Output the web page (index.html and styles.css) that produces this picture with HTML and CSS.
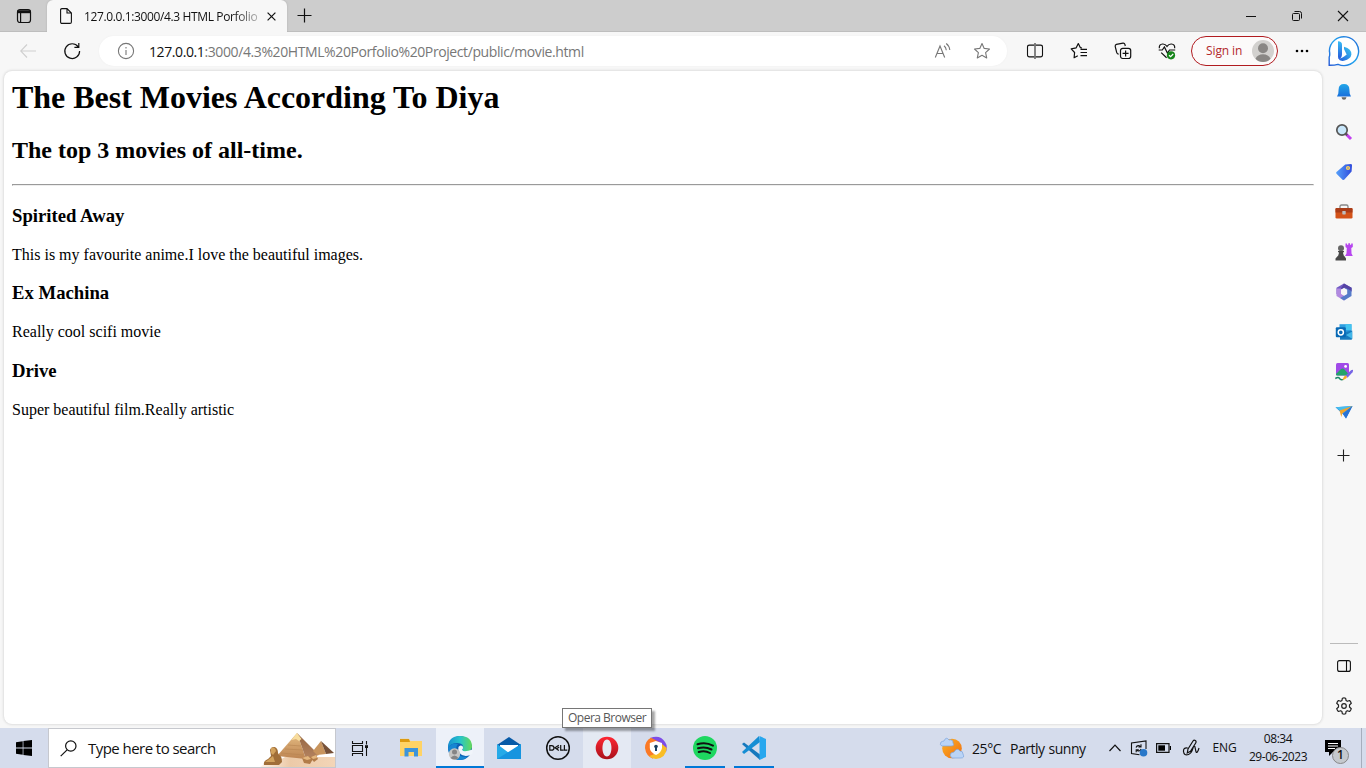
FILE: index.html
```html
<!DOCTYPE html>
<html lang="en">
<head>
<meta charset="utf-8">
<title>127.0.0.1:3000/4.3 HTML Porfolio Project</title>
<link rel="stylesheet" href="styles.css">
</head>
<body>
<div class="screen">
  <header class="tabbar">
    <div class="tab-actions"><svg width="16" height="16" viewBox="0 0 16 16" fill="none" stroke="#111" stroke-width="1.2"><rect x="1.5" y="1.5" width="13" height="13" rx="2.5"/><path d="M1.5 3.7H14.5" stroke-width="3"/><path d="M4.6 5V14.5"/></svg></div>
    <div class="tab">
      <svg width="12" height="16" viewBox="0 0 12 16" fill="none" stroke="#111" stroke-width="1.1"><path d="M1.5.6H7L11.4 5V14Q11.4 15.4 10 15.4H2Q.6 15.4.6 14V2Q.6.6 2 .6ZM7 .6V5H11.4"/></svg>
      <span class="tab-title">127.0.0.1:3000/4.3 HTML Porfolio</span>
      <svg class="tab-close" width="9" height="9" viewBox="0 0 9 9" stroke="#111" stroke-width="1.2"><path d="M.6.6 8.4 8.4M8.4.6.6 8.4"/></svg>
    </div>
    <svg class="tab-new" width="15" height="15" viewBox="0 0 15 15" stroke="#111" stroke-width="1.2"><path d="M7.5.5V14.5M.5 7.5H14.5"/></svg>
    <div class="window-controls">
      <span><svg width="12" height="12" viewBox="0 0 12 12" stroke="#111"><path d="M1 6.5H11"/></svg></span>
      <span><svg width="12" height="12" viewBox="0 0 12 12" fill="none" stroke="#111"><rect x="1.5" y="3.5" width="7" height="7" rx="1"/><path d="M3.5 1.5H8.5Q10.5 1.5 10.5 3.5V8.5"/></svg></span>
      <span><svg width="12" height="12" viewBox="0 0 12 12" stroke="#111" stroke-width="1.1"><path d="M1 1 11 11M11 1 1 11"/></svg></span>
    </div>
  </header>

  <div class="toolbar">
    <span class="tool"><svg width="16" height="14" viewBox="0 0 16 14" fill="none" stroke="#cfcfcf" stroke-width="1.1"><path d="M7 .5.7 7 7 13.5M.7 7H16"/></svg></span>
    <span class="tool"><svg width="18" height="18" viewBox="0 0 18 18" fill="none" stroke="#111" stroke-width="1.2"><path d="M15.2 4.8A7.4 7.4 0 1 0 16.6 9M15.8 1V5.3H11.4"/></svg></span>
    <div class="address">
      <svg width="18" height="18" viewBox="0 0 18 18" fill="none" stroke="#777" stroke-width="1.1"><circle cx="9" cy="9" r="7.6"/><path d="M9 8V13M9 5V6.4"/></svg>
      <span class="url"><b>127.0.0.1</b>:3000/4.3%20HTML%20Porfolio%20Project/public/movie.html</span>
      <svg class="read" width="18" height="18" viewBox="0 0 18 18" fill="none" stroke="#777" stroke-width="1.1"><path d="M1.3 15.5 6 4 10.7 15.5M3 11.5H9M10 3.8Q12 5.2 12.3 8.2M12.2 1.5Q15.3 3.8 15.8 8"/></svg>
      <svg width="18" height="18" viewBox="0 0 18 18" fill="none" stroke="#777" stroke-width="1.1" stroke-linejoin="round"><path d="M9 1.5 11.2 6.4 16.5 7 12.6 10.6 13.7 15.9 9 13.3 4.3 15.9 5.4 10.6 1.5 7 6.8 6.4Z"/></svg>
    </div>
    <span class="tool"><svg width="18" height="18" viewBox="0 0 18 18" fill="none" stroke="#111" stroke-width="1.1"><path d="M9 3.1H3.5Q1.5 3.1 1.5 5V13Q1.5 14.9 3.5 14.9H9M9 3.1H14.5Q16.5 3.1 16.5 5V13Q16.5 14.9 14.5 14.9H9"/><path d="M9 1V17" stroke="#777" stroke-width="1.8"/></svg></span>
    <span class="tool"><svg width="18" height="18" viewBox="0 0 18 18" fill="none" stroke="#111" stroke-width="1.2" stroke-linejoin="round"><path d="M12 6 10.4 5.7 8.3 1.6 6.2 5.8 1.2 6.8 4.6 10.5 4.1 15.7 7.8 13.8M10.5 7.3H17M10.5 10.5H17M10.5 13.6H17"/></svg></span>
    <span class="tool"><svg width="18" height="18" viewBox="0 0 18 18" fill="none" stroke="#111" stroke-width="1.2"><path d="M4.7 12.3 3.6 11.7Q3 11.3 2.7 10.5L1.2 4.3Q1 2.8 2.4 2.4L9 1.1Q10.5.9 10.9 2.4L11.3 4"/><rect x="6.5" y="6.3" width="10.2" height="10.2" rx="2.2"/><path d="M11.6 8.4V14.4M8.6 11.4H14.6"/></svg></span>
    <span class="tool"><svg width="18" height="18" viewBox="0 0 18 18" fill="none" stroke="#111" stroke-width="1.2"><path d="M1.3 6.2Q1 2.2 4.6 2 7.2 1.8 9 4.4 10.8 1.8 13.4 2 17 2.2 16.7 6.2M.7 8H4.3L6.4 5 9.4 11 11.5 8H17.2M3.2 10.6 8.6 15.8"/><circle cx="13" cy="13.3" r="4.1" fill="#16851b" stroke="none"/><path d="M11 13.2 12.6 14.6 15.2 12" stroke="#fff"/></svg></span>
    <div class="signin"><span>Sign in</span>
      <svg width="22" height="22" viewBox="0 0 22 22"><circle cx="11" cy="11" r="11" fill="#d3d1cf"/><circle cx="11" cy="8.2" r="5" fill="#8a8785"/><path d="M3.5 18.8Q5.5 14.3 11 14.3T18.5 18.8Q15.5 22 11 22T3.5 18.8Z" fill="#8a8785"/></svg>
    </div>
    <span class="tool more"><svg width="14" height="4" viewBox="0 0 14 4"><circle cx="2" cy="2" r="1.3"/><circle cx="7" cy="2" r="1.3"/><circle cx="12" cy="2" r="1.3"/></svg></span>
    <span class="bing"><svg width="32" height="32" viewBox="0 0 32 32"><defs><linearGradient id="ring" x1="0" y1="1" x2="1" y2="0"><stop stop-color="#2459d5"/><stop offset=".5" stop-color="#23a5ef"/><stop offset="1" stop-color="#2367d5"/></linearGradient><linearGradient id="bing-b" x1="0" y1="0" x2="0" y2="1"><stop stop-color="#37bdf4"/><stop offset="1" stop-color="#2556d9"/></linearGradient><linearGradient id="bing-bowl" x1="1" y1="0" x2="0" y2="1"><stop stop-color="#3ccaf0"/><stop offset="1" stop-color="#2158dc"/></linearGradient></defs><path d="M1.2 30.3V22Q2.2 20 1.4 16A14.6 14.4 0 1 1 10 29.3C7 30.3 4 30.3 1.2 30.3Z" fill="#fff" stroke="url(#ring)" stroke-width="1.4"/><path d="M10 6.2Q14 6.4 14 9.5V19Q14 23 11 24.3 10 23.5 10 21.5Z" fill="url(#bing-b)"/><path d="M16 11.8Q23.8 14 23.4 19.5 22.8 24 16 25.8 11.5 26.6 10.3 23.3 13 24.3 18.7 19.4L17.3 16.8Q15.4 14 16 11.8Z" fill="url(#bing-bowl)"/></svg></span>
  </div>

  <div class="workspace">
    <main class="page">
      <h1>The Best Movies According To Diya</h1>
      <h2>The top 3 movies of all-time.</h2>
      <hr>
      <h3>Spirited Away</h3>
      <p>This is my favourite anime.I love the beautiful images.</p>
      <h3>Ex Machina</h3>
      <p>Really cool scifi movie</p>
      <h3>Drive</h3>
      <p>Super beautiful film.Really artistic</p>
    </main>
    <aside class="sidebar">
      <span><svg width="18" height="18" viewBox="0 0 18 18"><defs><linearGradient id="bell" x1="0" y1="0" x2="0" y2="1"><stop stop-color="#22a6e8"/><stop offset="1" stop-color="#1970dc"/></linearGradient></defs><path d="M9 1Q14.3 1 14.4 6.5L14.7 10.5 16 13.5H2L3.3 10.5 3.6 6.5Q3.7 1 9 1Z" fill="url(#bell)"/><path d="M6.5 14.2H11.5Q11 16.8 9 16.8T6.5 14.2Z" fill="#666"/></svg></span>
      <span><svg width="18" height="18" viewBox="0 0 18 18"><path d="M11 11 16 16" stroke="#c33ff0" stroke-width="3"/><path d="M10.5 10.5 12.2 12.2" stroke="#555" stroke-width="2"/><circle cx="7" cy="7" r="5.2" fill="#c8e6fa" stroke="#555" stroke-width="1.7"/></svg></span>
      <span><svg width="18" height="18" viewBox="0 0 18 18"><defs><linearGradient id="tag"><stop stop-color="#55a0fa"/><stop offset="1" stop-color="#304bdc"/></linearGradient></defs><path d="M10.2 1.6 16 1.1Q17.2 1.1 17 2.6L16.6 8.6 9.4 16.6Q8.4 17.5 7.3 16.5L1.5 10.8Q.7 9.8 1.5 9Z" fill="url(#tag)"/><circle cx="13" cy="5" r="2.1" fill="#ffd35a"/><circle cx="13" cy="5" r=".8" fill="#6a7fb5"/></svg></span>
      <span><svg width="18" height="18" viewBox="0 0 18 18"><path d="M5 6V3.5Q5 2 6.5 2H11.5Q13 2 13 3.5V6" fill="none" stroke="#888" stroke-width="1.3"/><rect x=".5" y="5" width="17" height="10.5" rx="1.3" fill="#d35218"/><path d="M.5 6Q.5 5 1.5 5H16.5Q17.5 5 17.5 6V9.5H.5Z" fill="#a93c18"/><rect x="7.3" y="8" width="3.4" height="3.4" rx=".6" fill="#bdbdbd"/></svg></span>
      <span><svg width="18" height="18" viewBox="0 0 18 18"><path d="M10.5.5H12V1.8H13.3V.3H15V1.8H16.2V.5H17.8V4L16.3 5 16.5 10.5 17.8 13H10L11.5 10.5 11.8 5 10.5 4Z" fill="#b746ef"/><circle cx="6" cy="5.2" r="3" fill="#666"/><path d="M3 8H9V9.3H8Q8 12 9.7 13.5L11 15.5V17.5H.5V15.5L2.3 13.5Q4 12 4 9.3H3Z" fill="#484848"/></svg></span>
      <span><svg width="18" height="18" viewBox="0 0 18 18"><path d="M9 .5 16.5 4.8V9L9 4.8 5.2 7V13L1.5 11V4.8Z" fill="#715bc4"/><path d="M1.5 5.5 6 5.6V10.8L12.5 14.8 9 17.5 1.5 13Z" fill="#b28ae0"/><path d="M16.5 4.8V13L9 17.5 5.2 14.9 12.2 11V6.5L9 4.8Z" fill="#567bc9"/><path d="M9 .5 16.5 4.8V8L10 4.5 5.5 6.2Z" fill="#5543a3"/><path d="M9 5.7 12 7.4V10.8L9 12.6 6 10.8V7.4Z" fill="#f7f7f7"/></svg></span>
      <span><svg width="18" height="18" viewBox="0 0 18 18"><rect x="4.5" y="1.2" width="12" height="12" fill="#2d9ee0"/><path d="M10.5 1.2H16.5V7H10.5Z" fill="#43c5f0"/><path d="M5 16.8V10L17.2 7.5V15.8Q17.2 16.8 16 16.8Z" fill="#177bbf"/><path d="M17.2 8.5V15.8L11 12Z" fill="#42b6e8"/><rect x=".8" y="4.3" width="10" height="10" rx="1" fill="#0869b5"/><circle cx="5.8" cy="9.3" r="2.6" fill="none" stroke="#fff" stroke-width="1.5"/></svg></span>
      <span><svg width="18" height="18" viewBox="0 0 18 18"><rect x="1" y="0" width="13" height="12.5" rx="1.5" fill="#a04ae8"/><path d="M1 11 6 6Q7.5 5 9 6L13.5 11V11.5Q13 12.5 12 12.5H2Q1 12.5 1 11Z" fill="#23a46a"/><circle cx="10.6" cy="3.4" r="1.4" fill="#fff"/><path d="M.3 15.5Q3.5 13.4 4.5 15.4T8.5 16.4" fill="none" stroke="#188866" stroke-width="1.5"/><path d="M10.6 12.5 16 7.3Q18 6 18.2 7.5L17.5 9.3 12.5 14.8Z" fill="#7664e5"/><path d="M7.5 17.3Q9 12 11 12.8 14 15 7.5 17.3Z" fill="#f5ac2a"/></svg></span>
      <span><svg width="18" height="18" viewBox="0 0 18 18"><path d="M.5 4.3 17.5 3 11 15.5 8.2 11.5Z" fill="#2789e3"/><path d="M.5 4.3 17.5 3 5.5 8Z" fill="#47bded"/><path d="M4.5 7.5 17.5 3 7.3 10.5 6.3 14Z" fill="#f1a52c"/><path d="M17.5 3 11 15.5 8 11Z" fill="#2872d5"/></svg></span>
      <span class="add"><svg width="13" height="13" viewBox="0 0 13 13" stroke="#222" stroke-width="1.1"><path d="M6.5.5V12.5M.5 6.5H12.5"/></svg></span>
      <i class="side-rule"></i>
      <span class="panel-toggle"><svg width="14" height="12" viewBox="0 0 14 12" fill="none" stroke="#111" stroke-width="1.1"><rect x=".6" y=".6" width="12.8" height="10.8" rx="2"/><path d="M9.5.6V11.4"/></svg></span>
      <span><svg width="18" height="18" viewBox="0 0 18 18" fill="none" stroke="#222" stroke-width="1.2" stroke-linejoin="round"><path d="M7.4 1.2Q9 .7 10.6 1.2L11.1 3.6 12.3 4.3 14.6 3.5Q15.9 4.7 16.3 6.3L14.5 8V10L16.3 11.7Q15.8 13.4 14.6 14.5L12.3 13.7 11.1 14.4 10.6 16.8Q9 17.3 7.4 16.8L6.9 14.4 5.7 13.7 3.4 14.5Q2.2 13.4 1.7 11.7L3.5 10V8L1.7 6.3Q2.1 4.7 3.4 3.5L5.7 4.3 6.9 3.6Z"/><circle cx="9" cy="9" r="2.3"/></svg></span>
    </aside>
  </div>

  <footer class="taskbar">
    <span class="start"><svg width="16" height="16" viewBox="0 0 16 16"><path d="M0 2.2 6.7 1.2V7.5H0ZM7.4 1.1 16 0V7.5H7.4ZM0 8.4H6.7V14.8L0 13.8ZM7.4 8.4H16V16L7.4 14.9Z"/></svg></span>
    <div class="search">
      <svg width="17" height="17" viewBox="0 0 17 17" fill="none" stroke="#111" stroke-width="1.2"><circle cx="10.8" cy="6" r="5.2"/><path d="M7.1 9.8.7 16.2"/></svg>
      <span>Type here to search</span>
      <svg class="pyramids" width="75" height="36" viewBox="0 0 75 36"><defs><linearGradient id="sand"><stop stop-color="#fff3e8"/><stop offset=".4" stop-color="#eccaa8"/><stop offset="1" stop-color="#f3d5b7"/></linearGradient><linearGradient id="lit" x1="0" y1="0" x2="0" y2="1"><stop stop-color="#e5bd83"/><stop offset="1" stop-color="#bd8452"/></linearGradient><linearGradient id="shade" x1="0" y1="0" x2="0" y2="1"><stop stop-color="#936442"/><stop offset="1" stop-color="#b58460"/></linearGradient></defs><path d="M0 36Q6 31 18 30L25 26H75V36Z" fill="url(#sand)"/><path d="M37 2 17 25 46 28Z" fill="url(#lit)"/><path d="M37 2 46 28 59 24Z" fill="url(#shade)"/><path d="M37 2 31.5 9 36 8 39 10 41.5 8Z" fill="#f8dd9e"/><path d="M61 10 53 20 57 24 66 23Z" fill="#c8945d"/><path d="M61 10 66 23 74 22Z" fill="#765037"/><path d="M21 22 44 24M25 18 43 19M28 14 41 15" stroke="#b78450" stroke-width=".6"/><path d="M10 19Q11 15.5 14.5 16 18 17 18 22L19 24Q22 25 22 31L19 34H4Q3 30 8 28L11 25Z" fill="#a06e38"/><path d="M11 17Q15 15 16 20L13 24 11 22ZM8 29 13 25 15 31H5Z" fill="#d2a25d"/><path d="M42 27 48 25 53 28 50 33 44 32ZM50 26 56 24 58 28 54 31Z" fill="#b27c49"/><path d="M42 27 48 25 51 28 47 29ZM51 26 56 24 57 27 53 28Z" fill="#e3b67e"/></svg>
    </div>
    <span class="task view"><svg width="18" height="17" viewBox="0 0 18 17" fill="none" stroke="#111" stroke-width="1.1"><path d="M1.5 1V3.5H11.5V1M1.5 16V13.5H11.5V16M1.5 5.5H11.5V11.5H1.5ZM15.5 1V4.5M15.5 8V16"/><path d="M14 5.2H17V8H14Z" fill="#111" stroke="none"/></svg></span>
    <span class="task"><svg width="22" height="20" viewBox="0 0 22 20"><path d="M0 2V.8H8.5L10.5 3H22V18H0Z" fill="#ffd365"/><path d="M0 1H9L10 4H0Z" fill="#dd9a10"/><path d="M4.5 10H18V18.5H14V14H8.5V18.5H4.5Z" fill="#3d94da"/></svg></span>
    <span class="task active"><svg width="26" height="26" viewBox="0 0 26 26"><defs><linearGradient id="edge-top"><stop stop-color="#168fd0"/><stop offset=".5" stop-color="#27c5cb"/><stop offset="1" stop-color="#65d957"/></linearGradient></defs><circle cx="13" cy="13" r="12" fill="#0d5fb2"/><path d="M1 13Q1 1 13 1 25 1 25 12 24 18 17 17 14 16.5 16 14 17.5 8 10 8 4 8 1 13Z" fill="url(#edge-top)"/><path d="M1 13Q5 7 11 9 8 12 10 17.5 12 22.5 21 21.5 17 25 12 25 2 24 1 13Z" fill="#1686d2"/><path d="M11.5 12Q13 9.5 15.5 11 17 13 15.2 14.8 16 18 25.6 14.5V18.5L23.5 20Q16 22.5 12.5 18 10.5 14.5 11.5 12Z" fill="#f1f5fb"/><circle cx="7.5" cy="19" r="5.7" fill="#c5c5c3"/><circle cx="7.5" cy="17" r="2.5" fill="#858585"/><path d="M3.5 23Q7.5 18 11.5 23 7.5 26 3.5 23Z" fill="#858585"/></svg></span>
    <span class="task"><svg width="24" height="24" viewBox="0 0 24 24"><path d="M0 9 12 1 24 9V13H0Z" fill="#075aa7"/><path d="M3 9H21V13L12 17 3 13Z" fill="#fff"/><path d="M0 8 12 17 24 8V23H0Z" fill="#25aae8"/><path d="M0 23 24 8V23Z" fill="#1694df"/></svg></span>
    <span class="task"><svg width="26" height="26" viewBox="0 0 26 26" fill="none" stroke="#111"><circle cx="13" cy="13" r="11.3" stroke-width="1.5"/><path d="M4.8 10.6H6.5Q9 10.8 9 12.9T6.5 15.2H4.8ZM15.7 10V15.2H18.6M19.4 10V15.2H22.3M13.8 10.2 10 12.8 13.8 15.5M14.2 12 11.3 14" stroke-width="1.2"/></svg></span>
    <span class="task hover"><svg width="24" height="24" viewBox="0 0 24 24"><defs><linearGradient id="opera" x1="0" y1="0" x2="0" y2="1"><stop stop-color="#ff2632"/><stop offset="1" stop-color="#a8111b"/></linearGradient></defs><path d="M12 .7A11.3 11.3 0 1 0 12 23.3A11.3 11.3 0 1 0 12 .7ZM12 3.5C18 3.5 18 20.5 12 20.5S6 3.5 12 3.5Z" fill="url(#opera)" fill-rule="evenodd"/></svg></span>
    <span class="task"><svg width="24" height="24" viewBox="0 0 24 24"><path d="M6 2Q16-2 21 6 24 10 22 16L13 8Z" fill="#7d4ce7"/><path d="M7 1.8Q1 5 1 12 2 20 9 22.7L11 12 17 7Z" fill="#fb7925"/><path d="M22.8 12Q22 22 12 23 8 23 5 20L14 17 18 8Z" fill="#f9bd25"/><path d="M5.8 7 11.8 5 18 7V12Q17 17 12 19 6 16 5.8 12Z" fill="#fff"/><circle cx="12" cy="10.5" r="1.8" fill="#193f60"/><path d="M11 11H13V15H11Z" fill="#193f60"/></svg></span>
    <span class="task running"><svg width="24" height="24" viewBox="0 0 24 24"><circle cx="12" cy="12" r="12" fill="#1ed760"/><path d="M4.5 8.3Q12.5 5.5 20 9.6M5 12.3Q12 10 18.5 13.5M5.7 16Q12 14 17 17" fill="none" stroke="#111" stroke-width="2" stroke-linecap="round"/></svg></span>
    <span class="task running"><svg width="24" height="24" viewBox="0 0 24 24"><path d="M0 8 2 6.4 18 18.5V24L1 9Z" fill="#1678bd"/><path d="M0 16 17 0 18 6 2 18Z" fill="#168ed4"/><path d="M17.5 0 24 3V21L17.5 24Z" fill="#28a7ee"/></svg></span>
    <div class="weather">
      <svg width="26" height="24" viewBox="0 0 26 24"><defs><linearGradient id="sun" x1="0" y1="0" x2="1" y2="1"><stop stop-color="#ffb322"/><stop offset="1" stop-color="#ed6d13"/></linearGradient></defs><circle cx="13" cy="12.5" r="9.8" fill="url(#sun)"/><path d="M3 10Q0 9 2 6 4 5 5 5 7 0 10 4 14 3 14 7 16 10 12 10ZM13 22Q10 20 12 17L15 16Q18 11 21 15 24 15 24 18 26 22 22 22Z" fill="#bad4f6" stroke="#7ba4dc" stroke-width=".7"/></svg>
      <span class="temp">25°C</span><span class="sky">Partly sunny</span>
    </div>
    <div class="tray">
      <span class="chev"><svg width="12" height="8" viewBox="0 0 12 8" fill="none" stroke="#111" stroke-width="1.2"><path d="M.5 7 6 1.2 11.5 7"/></svg></span>
      <span class="sync"><svg width="18" height="17" viewBox="0 0 18 17" fill="none" stroke="#111" stroke-width="1.1"><path d="M16 9V1L1.5 3V13.5L9.5 14.8M6 7.5Q7 5 9.3 5.8L10.8 7M11 4.3V7H8.4M11.2 9Q10.2 11.5 8 10.9L6.4 9.6M6.2 12.3V9.7H8.8"/><circle cx="13.5" cy="12.8" r="3.8" fill="#2877c9" stroke="none"/></svg></span>
      <span class="batt"><svg width="16" height="10" viewBox="0 0 16 10"><path d="M.6.6H13V9.4H.6Z" fill="none" stroke="#111" stroke-width="1.2"/><path d="M2.3 2.3H9V7.7H2.3Z"/><path d="M13.8 3H15V7H13.8Z"/></svg></span>
      <span class="pen"><svg width="18" height="18" viewBox="0 0 18 18" fill="none" stroke="#111" stroke-width="1.2"><path d="M6 10 11 2Q12 .7 13.3 1.6T13.7 4L8.5 12.3 5.3 14ZM5.7 9Q1.2 8.2 1.5 12.5 2 17 6.5 15.5 9.5 14.5 11 9.2T13.5 10.5 17 9"/></svg></span>
      <span class="lang">ENG</span>
      <div class="clock"><span>08:34</span><span class="date">29-06-2023</span></div>
      <span class="notice"><svg width="26" height="26" viewBox="0 0 26 26"><path d="M0 2H16V14H8L4 18V14H0Z"/><path d="M3 5.5H13M3 8H13M3 10.5H10" stroke="#fff"/><circle cx="15.5" cy="17.5" r="8" fill="#c5c9ce" stroke="#888"/></svg><b>1</b></span>
    </div>
  </footer>
  <div class="tooltip">Opera Browser</div>
</div>
</body>
</html>
```

FILE: styles.css
```css
* { box-sizing: border-box; }
body { margin: 0; overflow: hidden; }
svg { display: block; flex: none; }
.screen { width: 1366px; height: 768px; position: relative; display: flex; flex-direction: column; background: #f7f7f7; font-family: "Open Sans", "Noto Sans", sans-serif; color: #111; }
.tabbar { height: 32px; background: #cdcdcd; border-bottom: 1px solid #bebebe; display: flex; align-items: center; flex: none; }
.tab-actions { width: 47px; padding: 1px 0 0 16px; }
.tab { width: 240px; height: 32px; align-self: flex-start; background: #f7f7f7; border-radius: 6px 6px 0 0; display: flex; align-items: center; padding-left: 13px; box-shadow: 0 0 2px #aaa; clip-path: inset(0 -3px 0 -3px); }
.tab-title { margin-left: 12px; width: 175px; white-space: nowrap; overflow: hidden; font-size: 12px; letter-spacing: -.37px; -webkit-mask-image: linear-gradient(90deg, #000 85%, rgba(0,0,0,.25)); }
.tab-close { margin-left: 8px; }
.tab-new { margin-left: 10px; }
.window-controls { margin-left: auto; display: flex; }
.window-controls span { width: 46px; display: flex; justify-content: center; }
.toolbar { height: 38px; display: flex; align-items: center; padding-left: 6px; flex: none; }
.tool { width: 44px; display: flex; justify-content: center; flex: none; }
.address { width: 908px; height: 30px; margin: 0 6px 0 5px; border-radius: 15px; background: #fff; display: flex; align-items: center; padding: 0 16px 0 18px; box-shadow: 0 0 2px #eee; flex: none; }
.url { margin-left: 14px; margin-right: auto; color: #777; font-size: 14px; white-space: nowrap; letter-spacing: -.4px; }
.url b { font-weight: 400; color: #111; }
.read { margin-right: 21px; }
.signin { width: 87px; height: 30px; margin: 0 2px; border: 1px solid #b11b20; border-radius: 15px; background: #fcfafa; display: flex; align-items: center; justify-content: space-between; padding: 0 3px 0 14px; color: #b3282d; font-size: 12px; letter-spacing: -.1px; flex: none; }
.signin span { padding-bottom: 1px; }
.bing { width: 40px; display: flex; justify-content: center; flex: none; }
.workspace { height: 658px; flex: none; display: flex; padding: 1px 0 4px 4px; }
.page { width: 1318px; height: 653px; padding: 8px; background: #fff; border-radius: 8px; box-shadow: 0 0 3px #c5c5c5; font-family: "Liberation Serif", serif; color: #000; }
h1, h2, h3, p { margin: 0; white-space: nowrap; }
h1 { font-size: 32px; line-height: 37px; letter-spacing: -.02px; }
h2 { font-size: 24px; line-height: 28px; margin-top: 20px; }
hr { margin: 20px 0 19px; }
h3 { font-size: 18.72px; line-height: 22px; margin-bottom: 18.6px; }
p { font-size: 16px; line-height: 18px; margin-bottom: 18.9px; }
.sidebar { width: 44px; height: 655px; padding-top: 1px; display: flex; flex-direction: column; align-items: center; }
.sidebar span { height: 40px; width: 44px; display: flex; align-items: center; justify-content: center; flex: none; }
.sidebar .add { margin-top: 3px; padding-right: 1px; }
.side-rule { height: 1px; width: 28px; background: #bbb; margin-top: auto; }
.sidebar .panel-toggle { margin-top: 2px; }
.taskbar { height: 40px; background: #d5dcec; display: flex; align-items: stretch; flex: none; }
.start, .task { width: 48px; display: flex; align-items: center; justify-content: center; flex: none; }
.search { width: 288px; background: #fff; border: 1px solid #c6c8ce; display: flex; align-items: center; padding-left: 11px; font-size: 15px; letter-spacing: -.55px; white-space: nowrap; flex: none; }
.search span { margin-left: 11px; }
.pyramids { margin-left: auto; align-self: flex-end; }
.task { margin-right: 1px; }
.task.view { margin-right: 3px; }
.active { background: #edf1f9; border-bottom: 2px solid #0078d7; padding-top: 2px; }
.hover { background: #e4e9f3; }
.running { background: linear-gradient(#0078d7, #0078d7) center bottom / 40px 2px no-repeat; }
.weather { margin-left: 160px; width: 164px; display: flex; align-items: center; font-size: 14px; white-space: nowrap; }
.temp { margin-left: 7px; width: 38px; letter-spacing: -.4px; }
.sky { letter-spacing: -.5px; word-spacing: 1px; }
.tray { flex: 1; display: flex; align-items: center; }
.tray > span { display: flex; justify-content: center; flex: none; }
.chev { width: 24px; }
.sync { width: 24px; }
.batt { width: 26px; }
.pen { width: 28px; }
.tray .lang { width: 39px; padding-bottom: 1px; font-size: 12px; letter-spacing: -.2px; }
.clock { width: 68px; display: flex; flex-direction: column; align-items: center; font-size: 12px; line-height: 18px; letter-spacing: -.45px; white-space: nowrap; flex: none; }
.tray .notice { width: 50px; height: 40px; border-right: 1px solid #a6aebd; position: relative; justify-content: flex-start; padding: 10px 0 0 13px; }
.notice b { position: absolute; left: 25px; top: 18px; font-size: 12px; font-weight: 600; line-height: 18px; }
.tooltip { position: absolute; left: 562px; top: 708px; width: 90px; height: 20px; border: 1px solid #767676; background: #fff; color: #575757; font-size: 12px; line-height: 18px; padding-left: 5px; letter-spacing: -.5px; white-space: nowrap; box-shadow: 3px 3px 2px rgba(0,0,0,.35); }
```
